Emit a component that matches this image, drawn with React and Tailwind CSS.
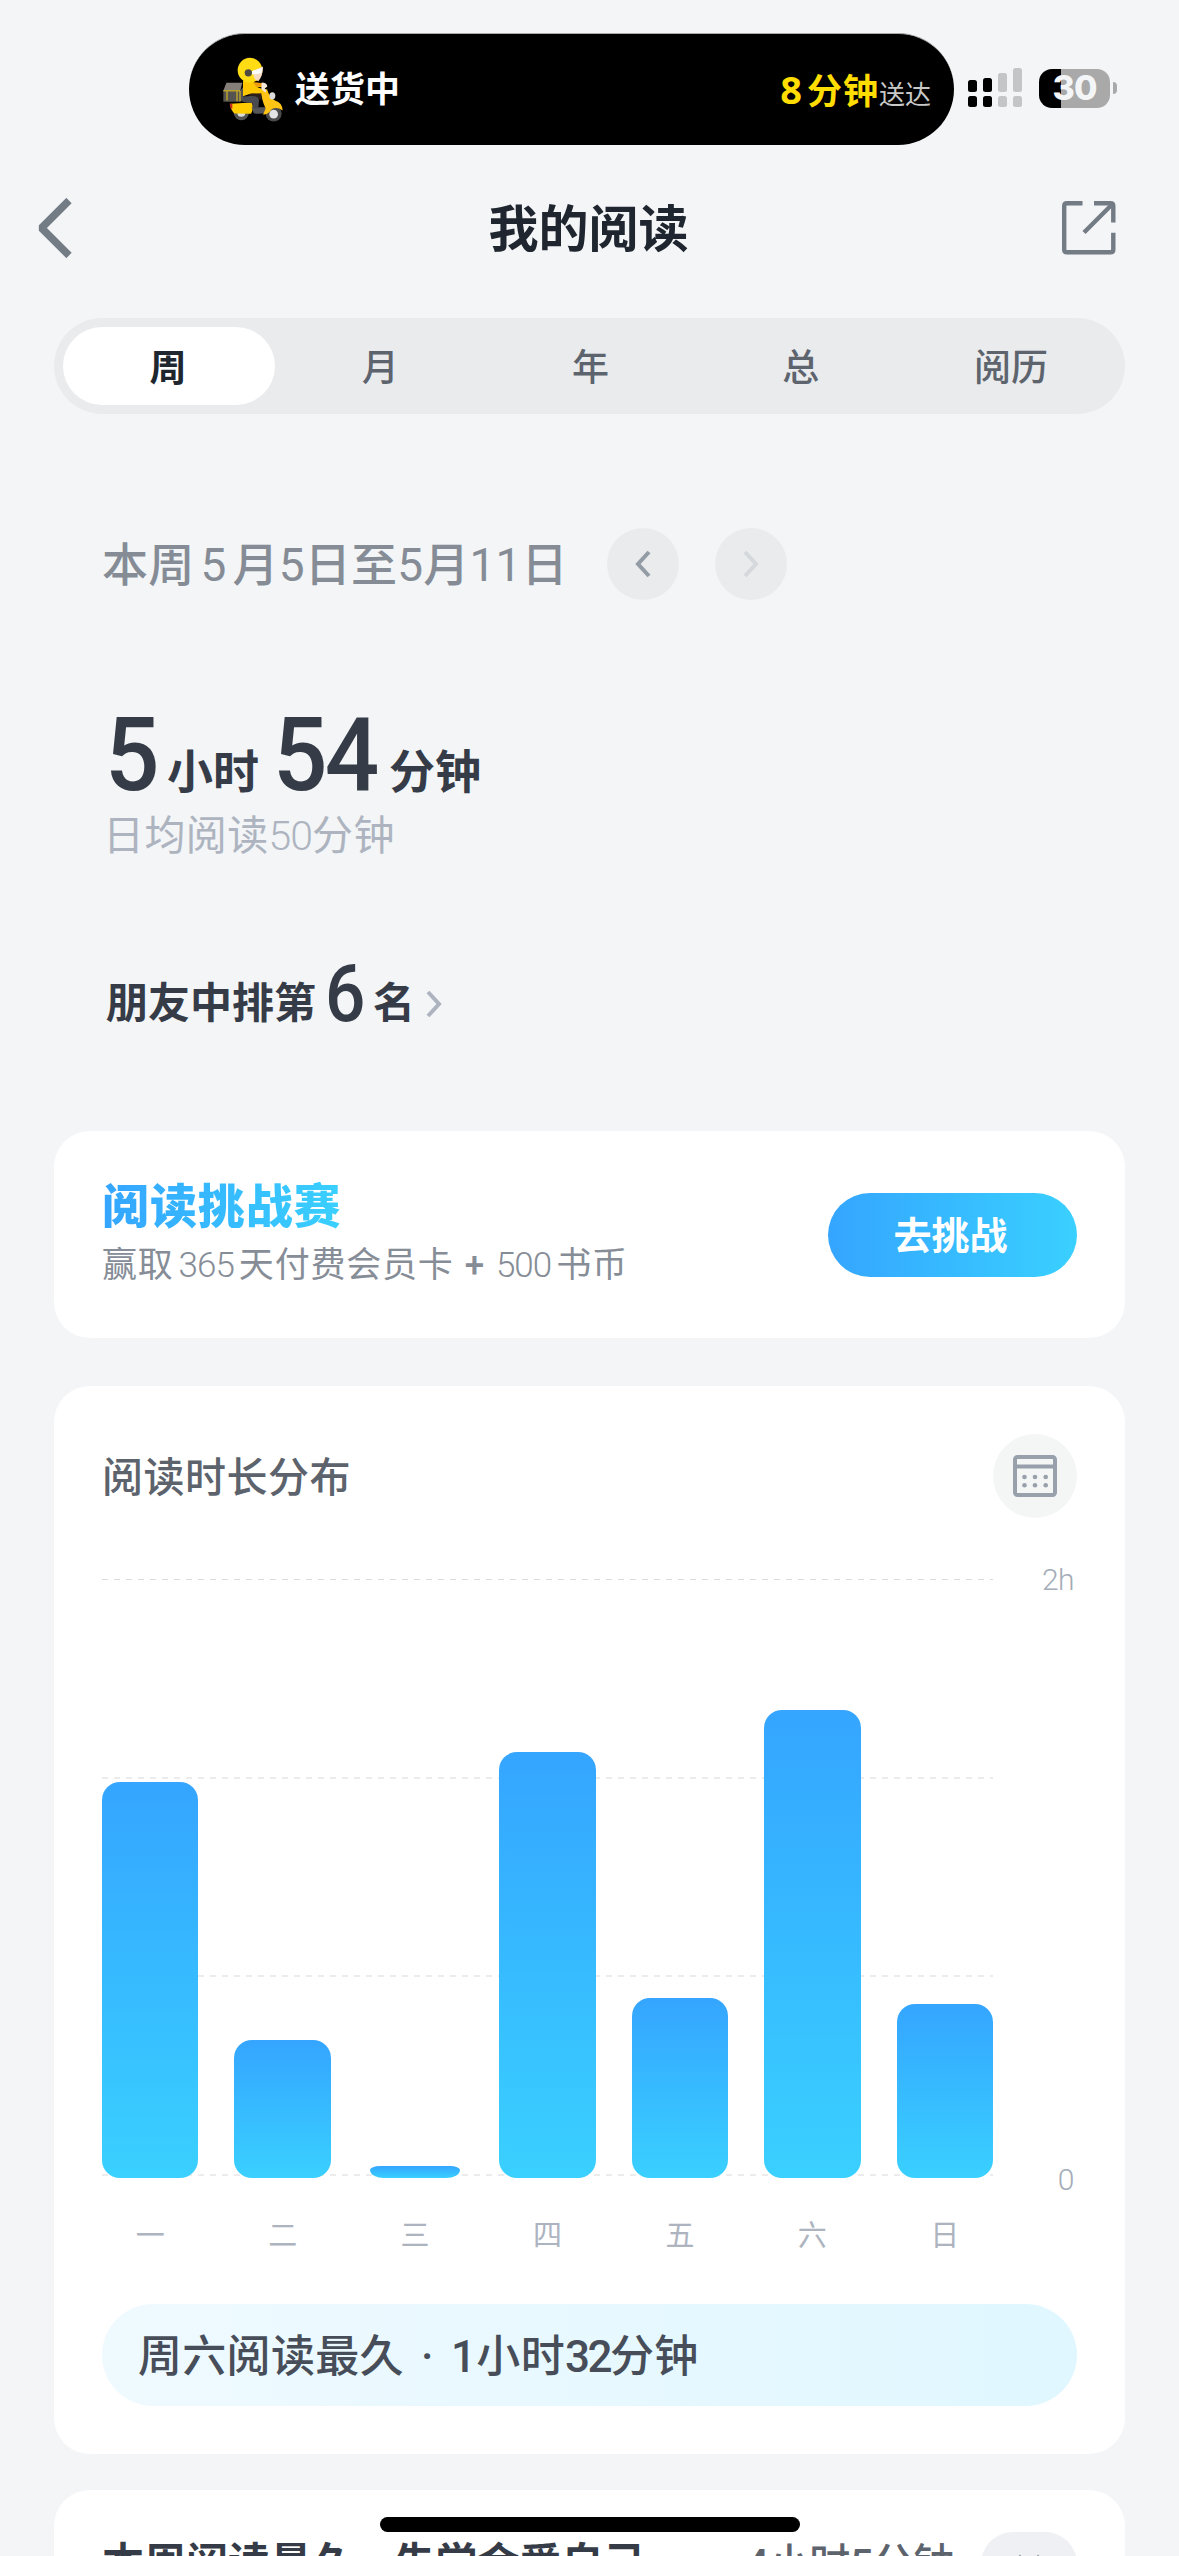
import React, { useState } from "react";

const tabs = ["周", "月", "年", "总", "阅历"];

const weekData = [
  { day: "一", height: 396 },
  { day: "二", height: 138 },
  { day: "三", height: 12 },
  { day: "四", height: 426 },
  { day: "五", height: 180 },
  { day: "六", height: 468 },
  { day: "日", height: 174 },
];

// Courier on a scooter, shown in the live activity
const ScooterIcon = () => (
  <svg viewBox="130 110 180 194" className="w-[60px] h-[65px] shrink-0">
    <circle cx="185" cy="276" r="23" fill="#555" />
    <circle cx="185" cy="277" r="12" fill="#ddd" />
    <circle cx="282" cy="279" r="24" fill="#4b4b4b" />
    <path d="M152 250 L216 246 Q224 262 214 280 L164 279 Q152 268 152 250 Z" fill="#ffcc00" />
    <path d="M150 250 h8 v14 h-5 Z" fill="#c8281e" />
    <path d="M216 260 h44 v15 q-18 8 -38 3 Z" fill="#55565a" />
    <path d="M243 208 L262 206 Q270 232 286 240 Q308 246 309 270 Q292 258 276 266 Q264 284 250 282 L258 264 Q246 240 243 208 Z" fill="#ffc414" />
    <circle cx="282" cy="281" r="13" fill="#e4e4e4" />
    <ellipse cx="278" cy="226" rx="9" ry="11" fill="#dcdcdc" />
    <path d="M188 228 L226 226 Q240 230 238 242 L236 262 L220 262 L218 248 L188 244 Z" fill="#4a4b50" />
    <path d="M210 220 L244 216 L246 238 L238 236 Q236 228 224 227 L206 226 Z" fill="#2e2018" />
    <path d="M190 180 Q206 176 224 186 L252 188 L250 200 L230 199 L250 206 L248 218 L214 219 L190 227 Z" fill="#ffc800" />
    <path d="M222 186 L252 188 L248 198 L228 197 Z" fill="#f09a10" />
    <path d="M246 186 q16 0 17 12 l-8 6 q8 6 2 12 l-12 -10 Z" fill="#f3e7dc" />
    <path d="M140 187 L188 187 L182 211 L131 211 Z" fill="#857f7a" />
    <path d="M131 209 H182 L190 200 V240 L180 244 H131 Z" fill="#55534f" />
    <path d="M131 211 H181 M142 212 V240 M172 212 V242 M181 211 V243" stroke="#e8c81a" strokeWidth="3" fill="none" />
    <circle cx="211" cy="149" r="37" fill="#ffdc14" />
    <path d="M222 150 L250 138 Q250 166 236 182 Q226 180 222 168 Z" fill="#f6dcc4" />
    <path d="M216 152 L248 142 L245 158 L216 162 Z" fill="#ffffff" />
    <circle cx="206" cy="157" r="11" fill="#4e4a42" />
  </svg>
);

const SignalIcon = () => (
  <svg viewBox="0 0 54 40" className="w-[54px] h-10">
    <g fill="#000">
      <rect x="0" y="12" width="9" height="12" rx="2.5" />
      <rect x="15" y="10" width="9" height="14" rx="2.5" />
      <rect x="0" y="28" width="9" height="11" rx="2.5" />
      <rect x="15" y="28" width="9" height="11" rx="2.5" />
    </g>
    <g fill="#c4c5c7">
      <rect x="30" y="5" width="9" height="19" rx="2.5" />
      <rect x="45" y="0" width="9" height="24" rx="2.5" />
      <rect x="30" y="28" width="9" height="11" rx="2.5" />
      <rect x="45" y="28" width="9" height="11" rx="2.5" />
    </g>
  </svg>
);

const ShareIcon = () => (
  <svg viewBox="0 0 54 54" className="w-[54px] h-[54px]" fill="none" stroke="#737b85" strokeWidth="4.4">
    <path d="M20.5 2.2 H5 Q2.2 2.2 2.2 5 V48.5 Q2.2 51.3 5 51.3 H48.5 Q51.3 51.3 51.3 48.5 V31.8" />
    <path d="M32 2.2 H48.5 Q51.3 2.2 51.3 5 V21.5" />
    <path d="M50 3.5 L22 31.5" />
  </svg>
);

const CalendarIcon = () => (
  <svg viewBox="0 0 44 42" className="w-11 h-[42px]" fill="none" stroke="#98a0ab" strokeWidth="4">
    <rect x="2" y="2" width="40" height="38" rx="2.5" />
    <path d="M2 11.5 H42" />
    <g fill="#98a0ab" stroke="none">
      <circle cx="11.5" cy="22" r="2.3" />
      <circle cx="22" cy="22" r="2.3" />
      <circle cx="32.7" cy="22" r="2.3" />
      <circle cx="11.5" cy="30.3" r="2.3" />
      <circle cx="22" cy="30.3" r="2.3" />
      <circle cx="32.7" cy="30.3" r="2.3" />
    </g>
  </svg>
);

const StatusBar = () => (
  <div className="flex items-start pt-[33px] pl-[189px] h-[180px]">
    <div className="flex items-center w-[765px] h-[112px] rounded-full bg-black border-t border-[#a9a9a9] pl-[34px] pr-[23px]">
      <ScooterIcon />
      <span className="ml-[12px] pt-[4px] text-[35px] font-bold text-white">送货中</span>
      <span className="ml-auto flex items-baseline pt-[2px]">
        <span className="font-['Open_Sans'] text-[38px] font-bold text-[#ffdd00] mr-[5px]">8</span>
        <span className="text-[35px] tracking-[1px] font-bold text-[#ffdd00]">分钟</span>
        <span className="text-[26px] text-[#c8c8c8]">送达</span>
      </span>
    </div>
    <div className="flex items-center ml-[14px] mt-[35px] h-10">
      <SignalIcon />
      <div className="ml-[17px] w-[71px] h-[39px] rounded-[13px] overflow-hidden flex items-center justify-center bg-[linear-gradient(90deg,#000_22px,#a9a9aa_22px)]">
        <span className="font-[Inter] text-[34px] leading-none font-extrabold tracking-[-1px] text-[#f3f5f7]">30</span>
      </div>
      <div className="ml-[3px] w-1 h-3 rounded-r-full bg-[#a9a9aa]" />
    </div>
  </div>
);

const Chart = () => (
  <div className="flex mt-[60px]">
    <div className="w-[891px]">
      <div className="grid h-[600px]">
        {/* Grid lines */}
        <div className="[grid-area:1/1] flex flex-col justify-between pt-px pb-[2px]">
          <div className="h-px bg-[repeating-linear-gradient(90deg,#dcdcdc_0_6px,transparent_6px_12px)]" />
          <div className="h-[2px] bg-[repeating-linear-gradient(90deg,#ececec_0_6px,transparent_6px_12px)]" />
          <div className="h-[2px] bg-[repeating-linear-gradient(90deg,#ececec_0_6px,transparent_6px_12px)]" />
          <div className="h-[2px] bg-[repeating-linear-gradient(90deg,#ececec_0_6px,transparent_6px_12px)]" />
        </div>
        {/* Bars */}
        <div className="[grid-area:1/1] flex items-end gap-9">
          {weekData.map((item) => (
            <div key={item.day} className="flex-1">
              <div
                className={
                  item.height > 20
                    ? "rounded-[18px] bg-linear-to-b from-[#35a5ff] to-[#3ad0ff]"
                    : "mx-[3px] rounded-t-[10px_4px] rounded-b-[14px_8px] bg-linear-to-b from-[#35a5ff] to-[#3ad0ff]"
                }
                style={{ height: item.height }}
              />
            </div>
          ))}
        </div>
      </div>
      <div className="flex gap-9 mt-[38px]">
        {weekData.map((item) => (
          <div key={item.day} className="flex-1 text-center text-[29px] leading-[40px] text-[#adb4bf]">
            {item.day}
          </div>
        ))}
      </div>
    </div>
    <div className="flex-1 flex flex-col justify-between items-end h-[640px] -mt-[18px] pr-[3px] text-[30px] leading-[40px] font-light text-[#a4acb8]">
      <span className="tracking-[-0.5px]">2h</span>
      <span className="tracking-[-0.5px]">0</span>
    </div>
  </div>
);

const App = () => {
  const [activeTab, setActiveTab] = useState("周");

  return (
    <div className="relative w-[1179px] h-[2556px] overflow-hidden bg-[#f3f5f7] font-[Roboto,'Noto_Sans_CJK_SC',sans-serif] whitespace-nowrap">
      <StatusBar />

      {/* Nav bar */}
      <div className="grid grid-cols-3 items-center h-24 pl-[36px] pr-[63px]">
        <svg viewBox="0 0 36 60" className="w-9 h-[60px]" fill="none" stroke="#737b85" strokeWidth="7.5">
          <path d="M33 2.5 L5.5 30 L33 57.5" strokeLinejoin="bevel" />
        </svg>
        <h1 className="justify-self-center pl-[25px] pt-[4px] text-[50px] leading-none font-bold text-[#20262f]">我的阅读</h1>
        <div className="justify-self-end">
          <ShareIcon />
        </div>
      </div>

      {/* Tabs */}
      <div className="mx-[54px] mt-[42px] h-24 flex p-[9px] rounded-full bg-[#eaebed]">
        {tabs.map((tab) => (
          <button
            key={tab}
            onClick={() => setActiveTab(tab)}
            className={
              tab === activeTab
                ? "flex-1 pt-[5px] pr-[2px] rounded-full bg-white text-[37px] font-bold text-[#20262f]"
                : "flex-1 pt-[5px] rounded-full text-[37px] font-medium text-[#5d646e]"
            }
          >
            {tab}
          </button>
        ))}
      </div>

      {/* Summary */}
      <div className="px-[102px]">
        <div className="flex items-center mt-[114px] h-[72px]">
          <div className="w-[505px] pt-[2px] text-[46px] leading-[70px] font-medium tracking-[0.2px] text-[#858c96]">
            本周<span className="mx-[6px] font-normal">5</span>月<span className="font-normal">5</span>日至
            <span className="font-normal">5</span>月<span className="font-normal">11</span>日
          </div>
          <button className="w-[72px] h-[72px] rounded-full bg-[#eaebed] flex items-center justify-center">
            <svg viewBox="0 0 16 28" className="w-4 h-7" fill="none" stroke="#939ba5" strokeWidth="4">
              <path d="M14 2 L3 14 L14 26" />
            </svg>
          </button>
          <button className="ml-9 w-[72px] h-[72px] rounded-full bg-[#eaebed] flex items-center justify-center">
            <svg viewBox="0 0 16 28" className="w-4 h-7" fill="none" stroke="#d5d8dc" strokeWidth="4">
              <path d="M2 2 L13 14 L2 26" />
            </svg>
          </button>
        </div>

        <div className="flex items-baseline mt-[100px] h-[106px] pl-[3px] text-[#363c47] leading-[106px]">
          <span className="inline-block origin-left translate-y-[2px] scale-x-[.94] text-[102px] font-medium">5</span>
          <span className="ml-[4px] text-[46px] font-bold">小时</span>
          <span className="ml-[14px] inline-block origin-left translate-y-[2px] scale-x-[.94] text-[102px] font-medium tracking-[-3px]">54</span>
          <span className="ml-[6px] text-[46px] font-bold">分钟</span>
        </div>
        <div className="pl-[1px] text-[41px] leading-[60px] tracking-[0.4px] text-[#adb4bf]">
          日均阅读<span className="tracking-[-1px] font-light">50</span>分钟
        </div>

        <div className="flex items-baseline mt-[80px] h-[90px] leading-[90px] pl-[4px] text-[#363c47]">
          <span className="text-[42px] font-bold">朋友中排第</span>
          <span className="ml-[9px] inline-block origin-left translate-y-[3px] scale-x-[.9] text-[79px] font-medium">6</span>
          <span className="ml-[3px] text-[42px] font-bold">名</span>
          <svg viewBox="0 0 16 28" className="ml-[11px] mb-[5px] w-4 h-7" fill="none" stroke="#adb4bf" strokeWidth="4">
            <path d="M2 2 L13 14 L2 26" />
          </svg>
        </div>
      </div>

      {/* Challenge card */}
      <div className="mx-[54px] mt-[95px] h-[207px] px-[48px] flex items-center justify-between rounded-[36px] bg-white">
        <div className="pt-[3px]">
          <h2 className="w-fit text-[47px] leading-[60px] tracking-[0.9px] font-black text-transparent bg-clip-text bg-linear-to-r from-[#35a5ff] to-[#3ad0ff]">
            阅读挑战赛
          </h2>
          <p className="text-[35px] leading-[58px] tracking-[0.8px] text-[#868d97]">
            赢取<span className="mx-[5px] font-light tracking-[-1px]">365</span>天付费会员卡
            <span className="mx-[11px] font-medium">+</span>
            <span className="mr-[5px] font-light tracking-[-1px]">500</span>书币
          </p>
        </div>
        <button className="w-[249px] h-[84px] pt-[4px] pr-[4px] rounded-full text-[38px] font-bold text-white bg-linear-to-r from-[#35a5ff] to-[#3ad0ff]">
          去挑战
        </button>
      </div>

      {/* Reading time distribution */}
      <div className="mx-[54px] mt-[48px] h-[1068px] p-[48px] rounded-[36px] bg-white">
        <div className="flex items-center justify-between h-[84px]">
          <h2 className="pt-[5px] text-[41px] tracking-[0.5px] font-medium text-[#5c636d]">阅读时长分布</h2>
          <button className="w-[84px] h-[84px] rounded-full bg-[#f4f6f6] flex items-center justify-center">
            <CalendarIcon />
          </button>
        </div>
        <Chart />
        <div className="mt-[48px] h-[102px] pl-[36px] pt-[2px] rounded-full text-[44px] leading-[102px] tracking-[0.3px] font-medium text-[#474e59] bg-linear-to-r from-[#effaff] to-[#e0f7ff]">
          周六阅读最久<span className="mx-[6px]"> · </span>1小时<span className="tracking-[-2.5px]">32</span>分钟
        </div>
      </div>

      {/* Longest read of the week */}
      <div className="mx-[54px] mt-[36px] h-[300px] px-[48px] pt-[42px] rounded-[36px] bg-white">
        <div className="flex items-start leading-[64px]">
          <h2 className="text-[42px] font-bold text-[#363c47]">
            本周阅读最久<span className="mx-[3px]"> · </span>先学会爱自己
          </h2>
          <span className="ml-auto mr-[27px] text-[41px] font-medium tracking-[-0.4px] text-[#5d646e]">4小时5分钟</span>
          <button className="w-24 h-[84px] rounded-[32px] bg-[#eff0f4] flex justify-center pt-[21px]">
            <svg viewBox="0 0 28 16" className="w-6 h-4" fill="none" stroke="#98a0ab" strokeWidth="4">
              <path d="M2 2 L14 13 L26 2" />
            </svg>
          </button>
        </div>
      </div>

      {/* Home indicator */}
      <div className="absolute left-[380px] top-[2517px] w-[420px] h-[15px] rounded-full bg-black" />
    </div>
  );
};

export default App;
